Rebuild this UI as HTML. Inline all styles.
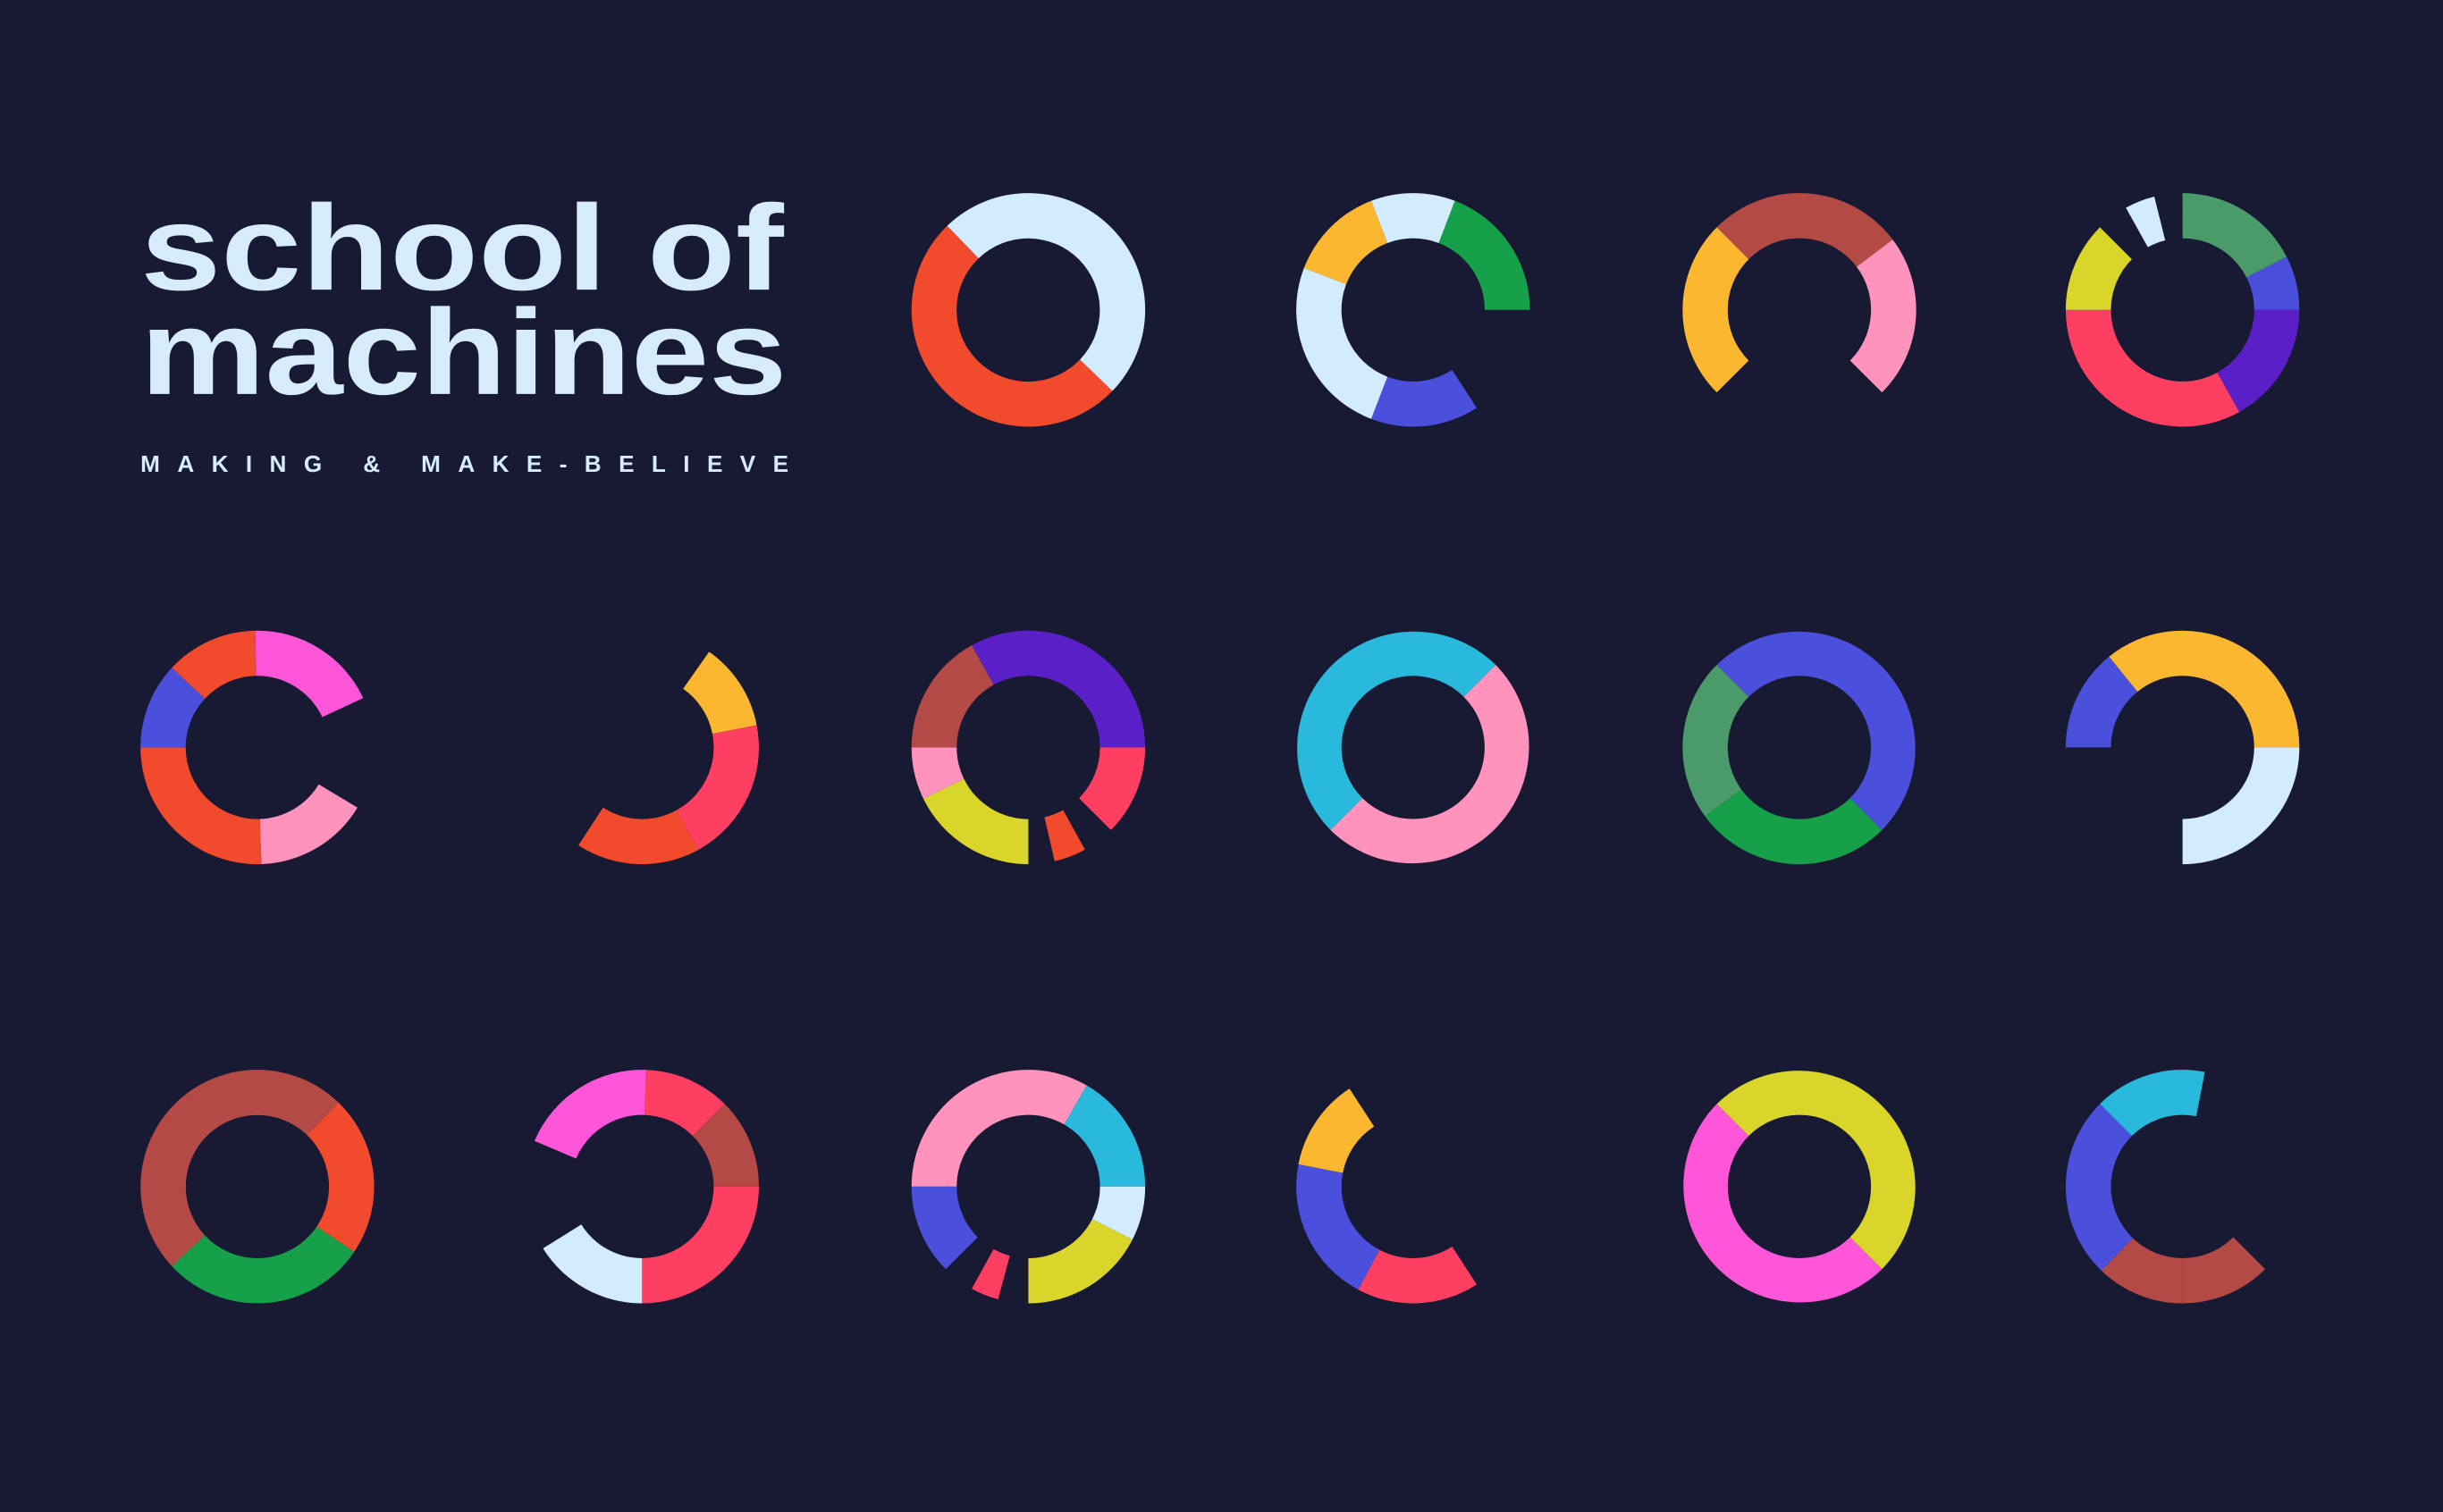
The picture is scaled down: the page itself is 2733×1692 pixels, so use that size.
<!DOCTYPE html>
<html><head><meta charset="utf-8"><style>
html,body{margin:0;padding:0;background:#181a33;}
svg{display:block}
</style></head><body>
<svg id="s" width="2733" height="1692" viewBox="0 0 1568 971" xmlns="http://www.w3.org/2000/svg">
<rect width="1568" height="971" fill="#181a33"/>
<g font-family="'Liberation Sans', sans-serif" font-weight="bold" fill="#d6ecfa">
<text x="90" y="186" font-size="78" textLength="413" lengthAdjust="spacingAndGlyphs">school of</text>
<text x="90" y="253" font-size="78" textLength="415" lengthAdjust="spacingAndGlyphs">machines</text>
<text x="90" y="303" font-size="15" textLength="416" lengthAdjust="spacing">MAKING &amp; MAKE-BELIEVE</text>
</g>
<g id="rings"></g>
</svg>
<script>
var C={lb:"#d3ecfb",or:"#f24a2c",gr:"#16a04a",bl:"#4a4fdc",yo:"#fcb731",br:"#b34a45",pk:"#ff93bc",gl:"#4b9a69",pu:"#5a1fc7",rp:"#ff3f62",ye:"#dad52a",mg:"#ff55d9",cy:"#29b9dd"};
var R=[
[660,199,[[-44,134,"lb"],[134,316,"or"]]],
[907,199,[[-21,21,"lb"],[21,90,"gr"],[147,201,"bl"],[201,291,"lb"],[291,339,"yo"]]],
[1155,199,[[-45,53,"br"],[53,135,"pk"],[225,315,"yo"]]],
[1401,199,[[0,63,"gl"],[63,90,"bl"],[90,151,"pu"],[151,270,"rp"],[270,315,"ye"],[331,346,"lb"]]],
[165,480,[[-1,65,"mg"],[121,178,"pk"],[178,270,"or"],[270,313,"bl"],[313,359,"or"]]],
[412,480,[[35,79,"yo"],[79,151,"rp"],[151,213,"or"]]],
[660,480,[[-29,90,"pu"],[90,135,"rp"],[151,167,"or"],[180,244,"ye"],[244,270,"pk"],[270,331,"br"]]],
[907,480,[[-135,45,"cy"],[45,225,"pk"]]],
[1155,480,[[-45,135,"bl"],[135,234,"gr"],[234,315,"gl"]]],
[1401,480,[[-39,90,"yo"],[90,180,"lb"],[270,321,"bl"]]],
[165,762,[[-133,44,"br"],[44,124,"or"],[124,227,"gr"]]],
[412,762,[[293,362,"mg"],[2,45,"rp"],[45,90,"br"],[90,180,"rp"],[180,238,"lb"]]],
[660,762,[[225,270,"bl"],[270,390,"pk"],[30,90,"cy"],[90,117,"lb"],[117,180,"ye"],[195,209,"rp"]]],
[907,762,[[147,208,"rp"],[208,281,"bl"],[281,327,"yo"]]],
[1155,762,[[-45,135,"ye"],[135,315,"mg"]]],
[1401,762,[[-45,11,"cy"],[135,180,"br"],[180,224,"br"],[224,315,"bl"]]]
];
var ro=75,ri=46,g=document.getElementById("rings"),h="";
function p(cx,cy,r,a){a=a*Math.PI/180;return (cx+r*Math.sin(a)).toFixed(2)+","+(cy-r*Math.cos(a)).toFixed(2);}
R.forEach(function(q){q[2].forEach(function(s){var a=s[0],b=s[1],l=(b-a)>180?1:0;
h+='<path fill="'+C[s[2]]+'" d="M'+p(q[0],q[1],ro,a)+' A'+ro+','+ro+' 0 '+l+' 1 '+p(q[0],q[1],ro,b)+' L'+p(q[0],q[1],ri,b)+' A'+ri+','+ri+' 0 '+l+' 0 '+p(q[0],q[1],ri,a)+' Z"/>';});});
g.innerHTML=h;
</script>
</body></html>
